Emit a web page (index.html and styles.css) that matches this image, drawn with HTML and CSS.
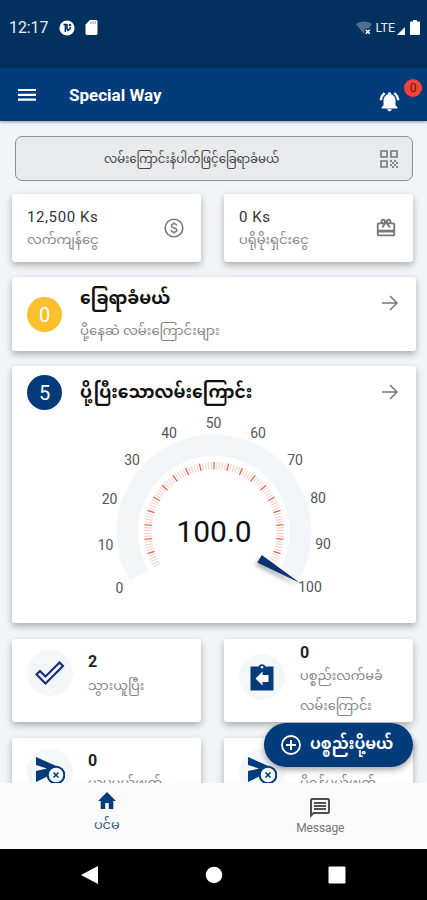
FILE: index.html
```html
<!DOCTYPE html>
<html lang="my">
<head>
<meta charset="utf-8">
<title>Special Way</title>
<link rel="stylesheet" href="styles.css">
</head>
<body>
<div class="phone">
  <div class="status">
    <span class="clock">12:17</span>
    <svg class="s-app" viewBox="0 0 16 16"><circle cx="8" cy="8" r="7.600" fill="#fff"/><path d="M6.300 4v8M4.500 4.500h4M8.500 4.300c-1.200 2.500-1 4.500.3 6.200 1.700-.6 2.500-2 2.400-3.500" fill="none" stroke="#02305f" stroke-width="1.400"/><circle cx="11" cy="5" r="1.200" fill="#02305f"/></svg>
    <svg class="s-sd" viewBox="4 2 16 20"><path fill="#fff" d="M18 2h-8L4 8v12c0 1.100.9 2 2 2h12c1.100 0 2-.9 2-2V4c0-1.100-.9-2-2-2z"/><path stroke="#8196af" stroke-width="1.500" d="M11 4v3M14 4v3M17 4v3"/></svg>
    <span class="grow"></span>
    <svg class="s-wifi" viewBox="0 0 16 16"><path fill="#4f6f92" d="M0 4.300C4.500.5 11.500.5 16 4.300L8 14z"/><path fill="#02305f" d="M8.500 8.500h7v7h-7z"/><path d="M9.800 9.800l4 4M13.800 9.800l-4 4" stroke="#fff" stroke-width="1.600"/></svg>
    <span class="lte">LTE</span>
    <svg class="s-cell" viewBox="0 0 8 8"><path fill="#fff" d="M8 0v8H0z"/></svg>
    <svg class="s-bat" viewBox="7 2 10 20" preserveAspectRatio="none"><path fill="#fff" d="M15.670 4H14V2h-4v2H8.330C7.600 4 7 4.600 7 5.330v15.330C7 21.400 7.600 22 8.330 22h7.330c.74 0 1.340-.6 1.340-1.330V5.330C17 4.600 16.400 4 15.670 4z"/></svg>
  </div>
  <header class="appbar">
    <svg class="menu" viewBox="0 0 18 13"><path d="M0 2h18M0 6.800h18M0 11.600h18" stroke="#fff" stroke-width="2.200"/></svg>
    <h1>Special Way</h1>
    <div class="bell">
      <svg viewBox="0 0 24 24"><path fill="#fff" stroke="#fff" stroke-width=".5" d="M7.580 4.080L6.150 2.650C3.750 4.480 2.170 7.300 2.030 10.500h2c.15-2.650 1.510-4.970 3.550-6.420zm12.390 6.420h2c-.15-3.200-1.730-6.020-4.120-7.850l-1.420 1.430c2.020 1.450 3.390 3.770 3.540 6.420zM18 11c0-3.070-1.640-5.640-4.500-6.320V4c0-.83-.67-1.500-1.500-1.500s-1.500.67-1.500 1.500v.68C7.630 5.360 6 7.920 6 11v5l-2 2v1h16v-1l-2-2v-5zm-6 11c.14 0 .27-.01.4-.04.65-.14 1.180-.58 1.440-1.180.1-.24.15-.5.15-.78h-4c.01 1.100.9 2 2.010 2z"/></svg>
      <span class="badge">0</span>
    </div>
  </header>

  <main>
    <div class="search">
      <span class="my">လမ်းကြောင်းနံပါတ်ဖြင့်ခြေရာခံမယ်</span>
      <svg class="qr" viewBox="0 0 18 18"><path d="M1 1h6v6H1zM11 1h6v6h-6zM1 11h6v6H1z" fill="none" stroke="#777" stroke-width="1.600"/><path fill="#888" d="M10 10h2v2h-2zM14 10h2v2h-2zM12 12h2v2h-2zM16 12h2v2h-2zM10 14h2v2h-2zM14 14h2v2h-2zM12 16h2v2h-2zM16 16h2v2h-2z"/></svg>
    </div>

    <div class="pair">
      <section class="card money">
        <div><b class="amt">12,500 Ks</b><span class="my sub">လက်ကျန်ငွေ</span></div>
        <svg class="i20" viewBox="0 0 20 20"><circle cx="10" cy="10" r="8.800" fill="none" stroke="#777" stroke-width="1.600"/><path d="M12.700 7.600C12.400 6.200 11.300 5.800 10 5.800c-1.500 0-2.600.7-2.600 2 0 3 5.400 1.300 5.400 4.300 0 1.300-1.200 2.100-2.800 2.100-1.500 0-2.600-.6-2.900-2M10 4.200v1.600M10 14.200v1.600" fill="none" stroke="#777" stroke-width="1.400"/></svg>
      </section>
      <section class="card money">
        <div><b class="amt">0 Ks</b><span class="my sub">ပရိုမိုးရှင်းငွေ</span></div>
        <svg class="i22" viewBox="0 0 24 24"><path fill="#777" d="M20 6h-2.180c.11-.31.18-.65.18-1 0-1.660-1.340-3-3-3-1.050 0-1.960.54-2.500 1.350l-.5.670-.5-.68C10.960 2.540 10.050 2 9 2 7.340 2 6 3.340 6 5c0 .35.07.69.18 1H4c-1.110 0-1.990.89-1.990 2L2 19c0 1.110.89 2 2 2h16c1.110 0 2-.89 2-2V8c0-1.110-.89-2-2-2zm-5-2c.55 0 1 .45 1 1s-.45 1-1 1-1-.45-1-1 .45-1 1-1zM9 4c.55 0 1 .45 1 1s-.45 1-1 1-1-.45-1-1 .45-1 1-1zm11 15H4v-2h16v2zm0-5H4V8h5.080L7 10.830 8.620 12 12 7.400l3.380 4.600L17 10.830 14.920 8H20v6z"/></svg>
      </section>
    </div>

    <section class="card track">
      <span class="dot amber">0</span>
      <div class="grow"><h2 class="my">ခြေရာခံမယ်</h2><span class="my sub">ပို့နေဆဲ လမ်းကြောင်းများ</span></div>
      <svg class="arrow" viewBox="0 0 16 16"><path d="M0 8h14.500M8 1l7 7-7 7" fill="none" stroke="#777" stroke-width="1.500"/></svg>
    </section>

    <section class="card done">
      <div class="done-head">
        <span class="dot navy">5</span>
        <h2 class="my grow">ပို့ပြီးသောလမ်းကြောင်း</h2>
        <svg class="arrow" viewBox="0 0 16 16"><path d="M0 8h14.500M8 1l7 7-7 7" fill="none" stroke="#777" stroke-width="1.500"/></svg>
      </div>
      <svg class="gauge" viewBox="90 410 246 190">
        <path d="M138.860 575.380A86.750 86.750 0 1 1 289.140 575.380" fill="none" stroke="#f3f6f8" stroke-width="21.500"/>
        <g id="ticks"></g>
        <g class="nums">
          <text x="119.500" y="592.500">0</text><text x="105.500" y="549.500">10</text><text x="109.500" y="504">20</text><text x="132" y="464.500">30</text><text x="169" y="437.500">40</text><text x="213.500" y="427.500">50</text><text x="258" y="437.500">60</text><text x="295" y="464.500">70</text><text x="318" y="503">80</text><text x="323" y="548.500">90</text><text x="310" y="591.500">100</text>
        </g>
        <text class="value" x="214" y="542">100.0</text>
        <path class="needle" d="M261.800 555L300 583 257.300 562.500z"/>
      </svg>
    </section>

    <div class="pair stats">
      <section class="card stat">
        <span class="disc"><svg viewBox="0 0 30 26"><path d="M1.500 14.500L5 11l5.500 5.500L24.500 2.500 28 6 10.500 23.500z" fill="none" stroke="#1d2b83" stroke-width="2.200"/></svg></span>
        <div><b>2</b><span class="my sub">သွားယူပြီး</span></div>
      </section>
      <section class="card stat two">
        <span class="disc"><svg viewBox="0 0 30 30"><path fill="#043b7b" d="M3.500 4.500h8a3.800 3.800 0 0 1 7 0h8v24h-23z"/><circle cx="15" cy="5.300" r="1.300" fill="#fff"/><path fill="#fff" d="M8.500 16.500l7-7V13h6v7h-6v3.500z"/></svg></span>
        <div><b>0</b><span class="my sub">ပစ္စည်းလက်မခံ<br>လမ်းကြောင်း</span></div>
      </section>
      <section class="card stat cancel">
        <span class="disc"><svg viewBox="0 0 30 30"><path fill="#043b7b" d="M1 0l27 12L1 25V14l11-2.500L1 8z"/><circle cx="21" cy="18" r="8.300" fill="#f5f8fa" stroke="#043b7b" stroke-width="2"/><path d="M18.500 15.500l5 5M23.500 15.500l-5 5" stroke="#043b7b" stroke-width="1.600"/></svg></span>
        <div><b>0</b><span class="my sub">ယူမှုပယ်ဖျက်</span></div>
      </section>
      <section class="card stat cancel">
        <span class="disc"><svg viewBox="0 0 30 30"><path fill="#043b7b" d="M1 0l27 12L1 25V14l11-2.500L1 8z"/><circle cx="21" cy="18" r="8.300" fill="#f5f8fa" stroke="#043b7b" stroke-width="2"/><path d="M18.500 15.500l5 5M23.500 15.500l-5 5" stroke="#043b7b" stroke-width="1.600"/></svg></span>
        <div><b>0</b><span class="my sub">ပို့ရန်ပယ်ဖျက်</span></div>
      </section>
    </div>
    <div class="fab">
      <svg viewBox="0 0 20 20"><circle cx="10" cy="10" r="9" fill="none" stroke="#fff" stroke-width="1.800"/><path d="M10 5v10M5 10h10" stroke="#fff" stroke-width="1.900"/></svg>
      <span class="my">ပစ္စည်းပို့မယ်</span>
    </div>
  </main>

  <nav class="tabs">
    <div class="tab on"><svg class="home" viewBox="2 3 20 17" preserveAspectRatio="none"><path fill="#043b7b" d="M10 20v-6h4v6h5v-8h3L12 3 2 12h3v8z"/></svg><span class="my">ပင်မ</span></div>
    <div class="tab"><svg class="msg" viewBox="2 2 20 20"><path fill="#505050" d="M4 4h16v12H5.170L4 17.170V4m0-2c-1.100 0-1.990.9-1.990 2L2 22l4-4h14c1.100 0 2-.9 2-2V4c0-1.100-.9-2-2-2H4zm2 10h12v2H6v-2zm0-3h12v2H6V9zm0-3h12v2H6V6z"/></svg><span>Message</span></div>
  </nav>
  <footer class="sys">
    <svg viewBox="0 0 18 18"><path fill="#fff" d="M17 0v18L0 9z"/></svg>
    <svg viewBox="0 0 18 18"><circle cx="9" cy="9" r="8.300" fill="#fff"/></svg>
    <svg viewBox="0 0 18 18"><rect x=".5" y=".5" width="17" height="17" rx="1" fill="#fff"/></svg>
  </footer>
</div>
<script src="gauge.js"></script>
</body>
</html>
```
FILE: styles.css
```css
* { box-sizing: border-box; }
body { margin: 0; font-family: Roboto, "Noto Sans Myanmar", "Padauk", "Noto Sans", sans-serif; color: #222; }
svg { display: block; flex: none; }
h1, h2 { margin: 0; }
.my { white-space: nowrap; }
.phone { width: 427px; height: 900px; display: flex; flex-direction: column; overflow: hidden; background: #f2f4f7; }
.grow { flex: 1; }

.status { height: 68px; flex: none; background: #02305f; color: #e8edf3; display: flex; align-items: center; padding: 0 7px 13px 9px; }
.clock { font-size: 16px; width: 50px; letter-spacing: -.1px; }
.s-app { width: 16px; height: 16px; }
.s-sd { width: 13px; height: 15px; margin-left: 10px; }
.s-wifi { width: 16px; height: 16px; }
.lte { font-size: 12.500px; margin: 0 2px 0 3px; }
.s-cell { width: 8px; height: 8px; margin-top: 6px; }
.s-bat { width: 10px; height: 15px; margin-left: 5px; }

.appbar { height: 53px; flex: none; background: #043c7b; color: #fff; display: flex; align-items: center; padding-left: 18px; box-shadow: 0 1px 3px rgba(0,0,0,.4); position: relative; z-index: 1; }
.menu { width: 18px; height: 13px; }
.appbar h1 { flex: 1; font-size: 17px; font-weight: 700; margin: 0 0 0 33px; }
.bell { position: relative; padding: 14px 26px 0 0; }
.bell svg { width: 23px; height: 23px; }
.badge { position: absolute; right: 5px; top: 3px; width: 18px; height: 18px; border-radius: 50%; background: #f44336; color: #55201c; font-size: 12px; line-height: 18px; text-align: center; }

main { flex: 1; min-height: 0; overflow: hidden; padding: 15px 11px 0 12px; position: relative; }
.search { height: 45px; margin: 0 3px; border: 1px solid #8e9092; border-radius: 7px; background: #e9eaec; display: flex; align-items: center; justify-content: space-between; padding: 0 14px 0 88px; font-size: 11.750px; color: #444; }
.search .my { padding-top: 3px; }
.qr { width: 18px; height: 18px; }
.pair { display: grid; grid-template-columns: 189px 189px; gap: 16px 23px; }
.card { background: #fff; border-radius: 3px; box-shadow: 0 3px 7px rgba(0,0,0,.3); }
.search + .pair { margin-top: 13px; }
.money { height: 68px; display: flex; justify-content: space-between; align-items: center; padding: 0 17px 0 15px; }
.money:last-child { padding-right: 16px; }
.money > div { padding-top: 3px; }
.amt { display: block; font-size: 15px; line-height: 20px; font-weight: 400; letter-spacing: .6px; color: #333; }
.sub { display: block; font-size: 13.100px; line-height: 26px; color: #858585; }
.i20 { width: 20px; height: 20px; }
.i22 { width: 22px; height: 22px; }
.track { height: 74px; margin-top: 15px; display: flex; align-items: center; padding: 0 18px 0 15px; }
.dot { width: 35px; height: 35px; border-radius: 50%; color: #fff; font-size: 20px; line-height: 36px; text-align: center; margin-right: 18px; flex: none; }
.amber { background: #fbc02d; }
.navy { background: #043b7b; }
h2 { font-size: 17.100px; line-height: 34px; font-weight: 700; color: #111; }
.arrow { width: 16px; height: 16px; }
.track .arrow { margin-bottom: 22px; }
.track h2 { margin-top: -4px; }
.track .sub { margin-top: 3px; font-size: 13.250px; }
.done { height: 257px; margin-top: 15px; }
.done-head { height: 44px; display: flex; align-items: center; padding: 8px 18px 0 15px; }
.gauge { width: 246px; height: 190px; margin-left: 78px; }
.nums text { font-size: 14px; text-anchor: middle; fill: #555; }
.value { font-size: 30px; text-anchor: middle; fill: #111; }
.needle { fill: #0b3272; filter: drop-shadow(-2px 3px 2px rgba(0,0,0,.3)); }
.major { stroke: #ee6146; stroke-width: 1.300; }
.minor { stroke: #f8cdc4; stroke-width: 1; }
.stats { margin-top: 16px; }
.stat { height: 83px; display: flex; padding: 11px 0 0 15px; }
.disc { width: 46px; height: 46px; border-radius: 50%; background: #f4f7f9; display: flex; align-items: center; justify-content: center; margin-right: 15px; flex: none; }
.disc svg { width: 30px; }
.stat b { display: block; font-size: 16px; line-height: 22px; margin-top: 1px; }
.stat .sub { line-height: 25px; }
.stat.cancel .sub { margin-top: -2px; }
.two { padding-top: 3px; }
.two .disc { margin-top: 12px; }
.two b { margin-top: 0; }
.two .sub { line-height: 30px; margin-top: -3px; font-size: 12.900px; }
.fab { position: absolute; right: 14px; bottom: 16px; width: 149px; height: 44px; border-radius: 22px; background: #043b7b; color: #fff; font-size: 15.500px; font-weight: 700; display: flex; align-items: center; padding-left: 17px; gap: 9px; box-shadow: 0 3px 6px rgba(0,0,0,.35); }
.fab svg { width: 20px; height: 20px; }

.tabs { height: 66px; flex: none; background: #fafafa; display: grid; grid-template-columns: 1fr 1fr; }
.tab { display: flex; flex-direction: column; align-items: center; padding-top: 15px; font-size: 12px; letter-spacing: -.1px; color: #777; }
.tab.on { padding-top: 9px; color: #345b8d; font-size: 13px; }
.home { width: 18px; height: 17px; }
.msg { width: 20px; height: 20px; }
.tab span { margin-top: 3px; }
.sys { height: 51px; flex: none; background: #000; display: flex; justify-content: space-between; align-items: center; padding: 0 81px; }
.sys svg { width: 18px; height: 18px; }
```
FILE: gauge.js
```javascript
const ticks = document.getElementById('ticks');
for (let i = 0; i <= 100; i++) {
  const a = (150 + i * 2.4) * Math.PI / 180;
  const major = i % 5 === 0 && i > 0 && i < 100;
  const line = document.createElementNS('http://www.w3.org/2000/svg', 'line');
  line.setAttribute('x1', 214 + 62.500 * Math.cos(a));
  line.setAttribute('y1', 532 + 62.500 * Math.sin(a));
  line.setAttribute('x2', 214 + 70 * Math.cos(a));
  line.setAttribute('y2', 532 + 70 * Math.sin(a));
  line.setAttribute('class', major ? 'major' : 'minor');
  ticks.appendChild(line);
}
```
